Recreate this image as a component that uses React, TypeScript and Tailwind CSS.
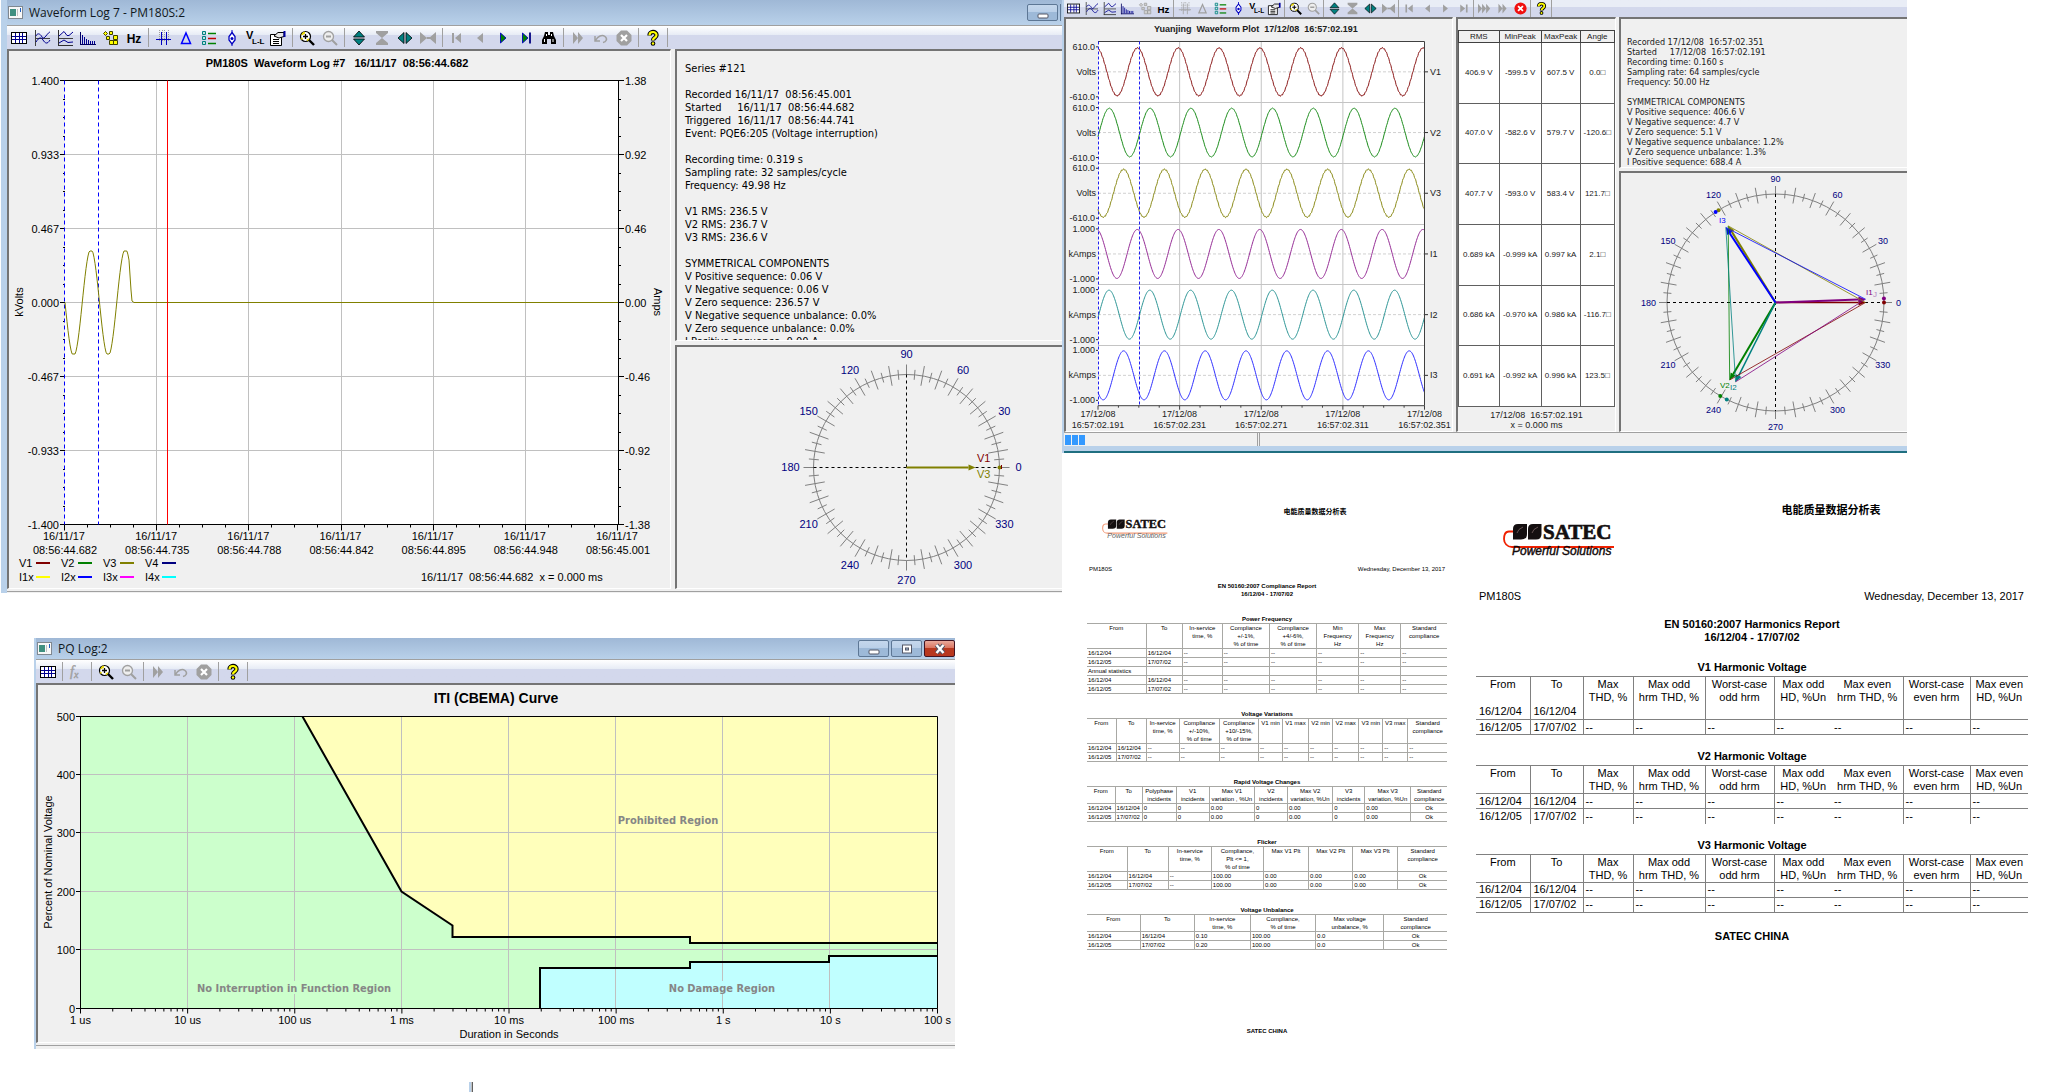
import React from "react";

/* ---------- toolbar icons ---------- */

type IconName =
  | "grid" | "scope" | "curves" | "bars" | "cascade" | "hz" | "rulers" | "rulersOff" | "delta" | "deltaOff"
  | "legend" | "marker" | "vll" | "props" | "zoomIn" | "zoomOut" | "growV" | "shrinkV" | "growH" | "shrinkH"
  | "first" | "prev" | "next" | "nextOff" | "last" | "lastOff" | "find" | "play2" | "play3" | "undo" | "stop" | "stopOn"
  | "help" | "fx" | "cascadeOff";

const G = "#a0a0a0";

function Glyph({ name }: { name: IconName }) {
  switch (name) {
    case "grid":
      return (
        <>
          <rect x="1" y="3" width="14" height="10" fill="#fff" />
          <path d="M1 6.5H15M1 9.5H15M4.5 3V13M8.5 3V13M11.5 3V13" stroke="#000090" fill="none" />
          <rect x="0.5" y="2.5" width="15" height="11" fill="none" stroke="#000" />
        </>
      );
    case "scope":
      return (
        <>
          <path d="M1.500 0V16M1 8.500H16" stroke="#404040" fill="none" />
          <path d="M2 6C3 3 6 3 8 7S13 3 16 2M2 12C5 7 7 7 9 10S13 15 16 10" stroke="#000090" fill="none" />
        </>
      );
    case "curves":
      return (
        <>
          <path d="M1.500 0V16M1 15.500H16" stroke="#303030" fill="none" />
          <path d="M2 8.500H16" stroke="#404040" fill="none" />
          <path d="M2 6L7 1.500L10 5.500H12L16 2M2 13L7 10L11 12.500L16 12" stroke="#000090" fill="none" />
        </>
      );
    case "bars":
      return (
        <>
          <path d="M0.500 2V15M0 14.500H16" stroke="#000060" fill="none" />
          <path d="M2.500 5V14M4.500 7V14M6.500 9V14M8.500 10V14M10.500 11V14M12.500 11V14M14.500 11V14" stroke="#000090" fill="none" />
        </>
      );
    case "cascade":
    case "cascadeOff": {
      const f = name === "cascade" ? "#ffff00" : "#d0d0d0";
      const s = name === "cascade" ? "#404000" : G;
      return (
        <g fill={f} stroke={s}>
          <path d="M0.500 3.500l2-2 2 2-2 2zM6.500 1.500h3v3h-3z" />
          <path d="M3.500 6.500h3v3h-3zM10.500 5.500h4v4h-4zM6.500 10.500h4v4h-4zM10.500 10.500h4v4h-4z" />
        </g>
      );
    }
    case "hz":
      return <text x="8" y="13" textAnchor="middle" fontSize="12" fontWeight="bold">Hz</text>;
    case "rulers":
    case "rulersOff":
      return (
        <>
          <path d="M4.500 0V12M7.500 0V12M9.500 0V12M13.500 0V12" stroke={G} strokeDasharray="1 1" fill="none" />
          <path d="M1 9.500H16M6.500 2V15M11.500 2V15" stroke={name === "rulers" ? "#0000c0" : G} fill="none" />
        </>
      );
    case "delta":
    case "deltaOff":
      return <path d="M8 3L12.500 13.500H3.500Z" stroke={name === "delta" ? "#0000ff" : G} strokeWidth="1.500" fill="none" />;
    case "legend":
      return (
        <>
          <path d="M1.500 1.500h3v3h-3zM1.500 6.500h3v3h-3zM1.500 11.500h3v3h-3z" fill="#c0e0e0" stroke="#008080" />
          <path d="M7 3.500H15" stroke="#008000" strokeWidth="1.500" />
          <path d="M7 8.500H15" stroke="#c00000" strokeWidth="1.500" />
          <path d="M7 13.500H15" stroke="#008000" strokeWidth="1.500" />
        </>
      );
    case "marker":
      return (
        <>
          <path d="M8 0V16" stroke="#0000c0" fill="none" />
          <path d="M8 2.500L11 6.500V10L8 14L5 10V6.500Z" fill="#fff" stroke="#0000c0" strokeWidth="1.300" />
          <circle cx="8" cy="8.500" r="1.500" fill="#0000c0" />
        </>
      );
    case "vll":
      return (
        <>
          <text x="-1" y="9" fontSize="11" fontWeight="bold">V</text>
          <text x="5" y="14" fontSize="8" fontWeight="bold">L-L</text>
        </>
      );
    case "props":
      return (
        <>
          <path d="M0.500 4.500H11.500V15.500H0.500Z" fill="#fff" stroke="#000" />
          <path d="M3 9.500H9M3 11.500H9M3 13.500H9" stroke="#000" fill="none" />
          <path d="M4 6L8 2.500H14V6.500L9 8Z" fill="#e8e8e8" stroke="#000" />
          <path d="M14.500 1V7" stroke="#0000a0" strokeWidth="2" />
        </>
      );
    case "zoomIn":
      return (
        <>
          <circle cx="6.500" cy="6.500" r="5" fill="#fff" stroke="#000" strokeWidth="1.200" />
          <path d="M3 5A4 4 0 0 1 6 2.500M3 9.500L2.500 8M8 10.500L10 9" stroke="#e8d800" strokeWidth="1.800" fill="none" />
          <path d="M4 6.500H9M6.500 4V9" stroke="#000" strokeWidth="1.300" />
          <path d="M10 10L15 15" stroke="#000" strokeWidth="2.400" />
        </>
      );
    case "zoomOut":
      return (
        <>
          <circle cx="6.500" cy="6.500" r="5" fill="#eee" stroke={G} strokeWidth="1.300" />
          <path d="M4 6.500H9M10 10L15 15" stroke={G} strokeWidth="2" />
        </>
      );
    case "growV":
      return <path d="M8 1L13.500 7H2.500ZM2.500 9H13.500L8 15Z" fill="#008080" stroke="#000" strokeWidth="0.800" />;
    case "shrinkV":
      return <path d="M2 1H14V3L8 8L2 3ZM8 8L14 13V15H2V13Z" fill={G} />;
    case "growH":
      return <path d="M1 8L7 2.500V13.500ZM9 2.500L15 8L9 13.500Z" fill="#008080" stroke="#000" strokeWidth="0.800" />;
    case "shrinkH":
      return <path d="M0 2V14L7 8ZM16 2V14L9 8ZM6 7H10V9H6Z" fill={G} />;
    case "first":
      return <path d="M3 3H5V13H3ZM12 3V13L6 8Z" fill={G} />;
    case "prev":
      return <path d="M11 3V13L5 8Z" fill={G} />;
    case "next":
      return <path d="M5.500 3V13L11 8Z" fill="#008000" stroke="#0000c0" strokeWidth="0.900" />;
    case "nextOff":
      return <path d="M5 3V13L11 8Z" fill={G} />;
    case "last":
      return (
        <>
          <path d="M4.500 3V13L10 8Z" fill="#008000" stroke="#0000c0" strokeWidth="0.900" />
          <path d="M12 2.500V13.500" stroke="#000080" strokeWidth="1.800" />
        </>
      );
    case "lastOff":
      return <path d="M4 3V13L10 8ZM11 3H13V13H11Z" fill={G} />;
    case "find":
      return (
        <>
          <path d="M4 2H7V5H9V2H12L13 6L15 10V14H10V9H6V14H1V10L3 6Z" fill="#000" />
          <path d="M3.500 9V12M12 9V12M5.500 4V6M10.500 4V6" stroke="#fff" />
        </>
      );
    case "play2":
      return <path d="M3 2V14L8 8ZM8 2V14L13 8Z" fill={G} />;
    case "play3":
      return <path d="M0 2V14L5 8ZM5 2V14L10 8ZM10 2V14L15 8Z" fill={G} />;
    case "undo":
      return <path d="M2 6L2 11H7M2.500 10.500C5 6 9 4.500 12 6.500C15 9 13 12 10 12.500" fill="none" stroke={G} strokeWidth="1.500" />;
    case "stop":
      return (
        <>
          <path d="M5 0.500H11L15.500 5V11L11 15.500H5L0.500 11V5Z" fill={G} />
          <path d="M5 5L11 11M11 5L5 11" stroke="#fff" strokeWidth="2.200" />
        </>
      );
    case "stopOn":
      return (
        <>
          <circle cx="8" cy="8" r="7.500" fill="#f01010" />
          <path d="M5 5L11 11M11 5L5 11" stroke="#fff" strokeWidth="2.200" />
        </>
      );
    case "help":
      return (
        <>
          <path d="M4.500 5.500C4.500 1 11.500 1 11.500 5C11.500 8 8 7.500 8 10.500" fill="none" stroke="#000" strokeWidth="4.400" />
          <circle cx="8" cy="13.500" r="2.300" fill="#000" />
          <path d="M4.500 5.200C4.500 1 11.500 1 11.500 5C11.500 8 8 7.500 8 10.200" fill="none" stroke="#ffff00" strokeWidth="2.200" />
          <circle cx="8" cy="13.500" r="1.200" fill="#ffff00" />
        </>
      );
    case "fx":
      return (
        <text x="1" y="12" fontSize="14" fontStyle="italic" fill={G} stroke={G} strokeWidth="0.400" fontFamily="Liberation Serif, serif">
          f<tspan fontSize="10" dy="2">x</tspan>
        </text>
      );
  }
}

function Toolbar({ items, small }: { items: (IconName | "|")[]; small?: boolean }) {
  return (
    <div
      role="toolbar"
      className={
        small
          ? "flex h-[17px] items-stretch bg-linear-to-b from-[#e9edf6] from-40% to-[#d3d8ec] to-40%"
          : "flex h-6 items-stretch border-t border-[#a0a0a0] bg-linear-to-b from-white via-[#e6ebf5] via-40% to-[#d3d8ec] to-40%"
      }
    >
      {items.map((it, i) =>
        it === "|" ? (
          <span key={i} className={small ? "flex w-[3px] shrink-0 justify-center" : "flex w-1.5 shrink-0 justify-center py-0.5"}>
            <span className="w-px bg-[#a0a0a0]" />
          </span>
        ) : (
          <button
            key={i}
            type="button"
            aria-label={it}
            className={
              small
                ? "flex w-[18px] shrink-0 items-center justify-center"
                : "flex w-[23px] shrink-0 items-center justify-center"
            }
          >
            <svg viewBox="0 0 16 16" className={small ? "h-[13px] w-[13px] overflow-visible" : "h-4 w-4 overflow-visible"}>
              <Glyph name={it} />
            </svg>
          </button>
        ),
      )}
    </div>
  );
}

/* ---------- window chrome ---------- */

function CaptionButton({ kind }: { kind: "min" | "max" | "close" }) {
  return (
    <button
      type="button"
      aria-label={kind}
      className={
        kind === "close"
          ? "flex h-[17px] w-[31px] items-center justify-center rounded-[2px] border border-[#431422] bg-linear-to-b from-[#e9a99b] via-[#d9705c] via-50% to-[#b8381f] to-50%"
          : "flex h-[17px] w-[31px] items-center justify-center rounded-[2px] border border-[#5d7795] bg-linear-to-b from-[#c5d7ec] via-[#b9cfe8] via-50% to-[#9db9d8] to-50%"
      }
    >
      <svg viewBox="0 0 14 12" className="h-3 w-3.5">
        {kind === "min" && <rect x="2" y="7" width="10" height="4" rx="1" fill="#fff" stroke="#535666" />}
        {kind === "max" && (
          <>
            <rect x="2.500" y="2" width="9" height="8" fill="#fff" stroke="#535666" />
            <rect x="5.500" y="5" width="3" height="2" fill="#a8c0dc" stroke="#535666" />
          </>
        )}
        {kind === "close" && (
          <>
            <path d="M3.500 2L10.500 10M10.500 2L3.500 10" stroke="#535666" strokeWidth="4.400" />
            <path d="M3.500 2L10.500 10M10.500 2L3.500 10" stroke="#fff" strokeWidth="2.400" />
          </>
        )}
      </svg>
    </button>
  );
}

function TitleBar({ title, children }: { title: string; children: React.ReactNode }) {
  return (
    <div className="flex h-full items-center bg-linear-to-b from-[#9fb8d6] to-[#b9d1ea] pl-px">
      <svg viewBox="0 0 15 13" className="mr-1.5 h-[13px] w-[15px] shrink-0">
        <rect x="0.500" y="0.500" width="14" height="12" fill="#f8f8f8" stroke="#808890" />
        <rect x="2" y="3" width="6" height="7" fill="#3f8f80" />
        <rect x="9" y="3" width="1" height="7" fill="#c0c0c0" />
        <rect x="12" y="2" width="1" height="4" fill="#2060c0" />
      </svg>
      <h2 className="grow font-['Open_Sans',sans-serif] text-[12px] leading-4 text-[#101820]">{title}</h2>
      <div className="flex gap-0.5">{children}</div>
    </div>
  );
}

const sunken = "overflow-hidden border-t-2 border-l-2 border-r border-b border-t-[#747474] border-l-[#747474] border-r-white border-b-white bg-[#f0f0f0]";
const sunkenOpen = "overflow-hidden border-t-2 border-l-2 border-b border-t-[#747474] border-l-[#747474] border-b-white bg-[#f0f0f0]";

/* ---------- phasor diagram ---------- */

const rad = (d: number) => (d * Math.PI) / 180;

type Vec = { a: number; r: number; c: string; w?: number };

function Phasor(p: { cx: number; cy: number; r: number; tick: number; lr: number; fs: number; vectors: Vec[]; children?: React.ReactNode }) {
  const at = (a: number, r: number) => [p.cx + r * Math.cos(rad(a)), p.cy - r * Math.sin(rad(a))];
  const ticks = [];
  for (let a = 0; a < 360; a += 5) {
    const main = a % 90 === 0;
    const len = a % 10 === 0 ? p.tick : p.tick / 2;
    const [x1, y1] = at(a, main ? p.r : p.r - len);
    const [x2, y2] = at(a, p.r + len);
    ticks.push(<line key={a} x1={x1} y1={y1} x2={x2} y2={y2} />);
  }
  return (
    <g>
      <g stroke="#808080" fill="none">
        <circle cx={p.cx} cy={p.cy} r={p.r} />
        {ticks}
      </g>
      <path
        d={`M${p.cx - p.r} ${p.cy}H${p.cx + p.r}M${p.cx} ${p.cy - p.r}V${p.cy + p.r}`}
        stroke="#000"
        strokeDasharray="3 3"
      />
      <g fill="#000080" fontSize={p.fs} textAnchor="middle">
        {[0, 30, 60, 90, 120, 150, 180, 210, 240, 270, 300, 330].map((a) => {
          const [x, y] = at(a, a === 0 ? p.lr - 1 : p.lr + (a % 180 === 0 ? 3 : 0));
          return <text key={a} x={x} y={y + p.fs * 0.36}>{a}</text>;
        })}
      </g>
      {p.vectors.map((v, i) => {
        const [x, y] = at(v.a, v.r);
        const [bx, by] = at(v.a, v.r - 7);
        const nx = 3 * Math.sin(rad(v.a));
        const ny = 3 * Math.cos(rad(v.a));
        const [dx, dy] = at(v.a, p.r);
        return (
          <g key={i} stroke={v.c} fill={v.c}>
            <line x1={p.cx} y1={p.cy} x2={bx} y2={by} strokeWidth={v.w ?? 1.5} />
            <path d={`M${x} ${y}L${bx + nx} ${by + ny}L${bx - nx} ${by - ny}Z`} stroke="none" />
            <circle cx={dx} cy={dy} r="2" stroke="none" />
          </g>
        );
      })}
      {p.children}
    </g>
  );
}

/* ---------- window 1: waveform log ---------- */

const WL = 65, WR = 618, WT = 80.5, WB = 524.5;
const xStep = (WR - WL) / 6;
const yStep = (WB - WT) / 6;

function logWave() {
  const pts: string[] = [];
  for (let x = WL; x <= 129; x += 1) {
    const s = -Math.sin((2 * Math.PI * (x - WL)) / 34.5);
    const clipped = Math.max(-0.96, Math.min(0.96, s)) / 0.96;
    pts.push(`${x},${(302.5 - 51.5 * clipped).toFixed(1)}`);
  }
  pts.push("131,290", "132,301", `134,302.5`, `${WR},302.5`);
  return pts.join(" ");
}

function WaveformLogChart() {
  const left = ["1.400", "0.933", "0.467", "0.000", "-0.467", "-0.933", "-1.400"];
  const right = ["1.38", "0.92", "0.46", "0.00", "-0.46", "-0.92", "-1.38"];
  const times = ["44.682", "44.735", "44.788", "44.842", "44.895", "44.948", "45.001"];
  const legend: [string, string, number, number][] = [
    ["V1", "#800000", 19, 567], ["V2", "#008000", 61, 567], ["V3", "#808000", 103, 567], ["V4", "#000080", 145, 567],
    ["I1x", "#ffff00", 19, 581], ["I2x", "#0000ff", 61, 581], ["I3x", "#ff00ff", 103, 581], ["I4x", "#00ffff", 145, 581],
  ];
  return (
    <svg viewBox="9 51 661 537" className="block h-auto w-full" fontSize="11">
      <rect x={WL} y={WT} width={WR - WL} height={WB - WT} fill="#fff" />
      <text x="337" y="67" textAnchor="middle" fontWeight="bold">
        {"PM180S\u00a0 Waveform Log #7\u00a0\u00a0 16/11/17\u00a0 08:56:44.682"}
      </text>
      <g stroke="#c0c0c0">
        {[1, 2, 3, 4, 5].map((i) => (
          <React.Fragment key={i}>
            <line x1={Math.round(WL + i * xStep) - 0.5} x2={Math.round(WL + i * xStep) - 0.5} y1={WT} y2={WB} />
            <line x1={WL} x2={WR} y1={WT + i * yStep} y2={WT + i * yStep} />
          </React.Fragment>
        ))}
      </g>
      <path d={`M60 ${WT}H623M60 ${WB}H623M${WR + 0.5} ${WT}V${WB}`} stroke="#000" />
      <g stroke="#000">
        {Array.from({ length: 25 }, (_, i) => {
          const y = Math.floor(WT + (i * yStep) / 4) + 0.5;
          const x = Math.round(WL + (i * xStep) / 4) - 0.5;
          const l = i % 4 === 0 ? 5 : 2;
          return <path key={i} d={`M${WL - l} ${y}H${WL}M${WR} ${y}H${WR + l + 1}M${x} ${WB}V${WB + l + 1}`} />;
        })}
      </g>
      <path d={`M64.500 ${WT}V${WB}M98.500 ${WT}V${WB}`} stroke="#0000ff" strokeDasharray="4 3" />
      <polyline points={logWave()} fill="none" stroke="#808000" />
      <path d={`M167.500 ${WT}V${WB}`} stroke="#ff0000" />
      {left.map((t, i) => (
        <text key={t} x="59" y={WT + i * yStep + 4} textAnchor="end">{t}</text>
      ))}
      {right.map((t, i) => (
        <text key={t} x="625" y={WT + i * yStep + 4}>{t}</text>
      ))}
      {times.map((t, i) => (
        <g key={t} textAnchor="middle">
          <text x={WL - 1 + i * xStep} y="540">16/11/17</text>
          <text x={WL + i * xStep} y="554">{"08:56:" + t}</text>
        </g>
      ))}
      <text transform="translate(23 302) rotate(-90)" textAnchor="middle">kVolts</text>
      <text transform="translate(654 302) rotate(90)" textAnchor="middle">Amps</text>
      {legend.map(([t, c, x, y]) => (
        <g key={t}>
          <text x={x} y={y}>{t}</text>
          <rect x={x + 17} y={y - 5} width="14" height="2" fill={c} />
        </g>
      ))}
      <text x="421" y="581">{"16/11/17\u00a0 08:56:44.682\u00a0 x = 0.000 ms"}</text>
    </svg>
  );
}

const tahoma = "font-['DejaVu_Sans_Condensed','DejaVu_Sans',sans-serif]";

function WaveformLogWindow() {
  return (
    <section className="ml-px border-l-6 border-[#b9d1ea] bg-[#f0f0f0]">
      <div className="h-[25px]">
        <TitleBar title="Waveform Log 7 - PM180S:2">
          <CaptionButton kind="min" />
          <span className="h-[17px] w-0.5 border-l border-[#5d7795]" />
        </TitleBar>
      </div>
      <Toolbar
        items={["grid", "scope", "curves", "bars", "cascade", "hz", "|", "rulers", "delta", "legend", "marker", "vll", "props", "|",
          "zoomIn", "zoomOut", "|", "growV", "shrinkV", "growH", "shrinkH", "|", "first", "prev", "next", "last", "find", "|",
          "play2", "undo", "stop", "|", "help", "|"]}
      />
      <div className="grid grid-cols-[664fr_4fr_387fr]">
        <div className={sunken}><WaveformLogChart /></div>
        <div />
        <div className="flex flex-col gap-1">
          <div className={`h-[292px] pt-[11px] pl-[8px] text-[11px] leading-[13px] whitespace-pre ${tahoma} ${sunkenOpen}`}>
            {`Series #121

Recorded 16/11/17  08:56:45.001
Started     16/11/17  08:56:44.682
Triggered  16/11/17  08:56:44.741
Event: PQE6:205 (Voltage interruption)

Recording time: 0.319 s
Sampling rate: 32 samples/cycle
Frequency: 49.98 Hz

V1 RMS: 236.5 V
V2 RMS: 236.7 V
V3 RMS: 236.6 V

SYMMETRICAL COMPONENTS
V Positive sequence: 0.06 V
V Negative sequence: 0.06 V
V Zero sequence: 236.57 V
V Negative sequence unbalance: 0.0%
V Zero sequence unbalance: 0.0%
I Positive sequence: 0.00 A`}
          </div>
          <div className={sunkenOpen}>
            <svg viewBox="677 347 385 241" className="block h-auto w-full">
              <Phasor cx={906.5} cy={467.5} r={93} tick={10} lr={113} fs={11} vectors={[{ a: 0, r: 69, c: "#808000", w: 2 }]}>
                <rect x="1001" y="465" width="1" height="4" fill="#800000" />
                <g fontSize="11">
                  <text x="977" y="462" fill="#800000">V1</text>
                  <text x="977" y="478" fill="#808000">V3</text>
                </g>
              </Phasor>
            </svg>
          </div>
        </div>
      </div>
      <div className="h-[4px] border-t border-[#f0f0f0]">
        <div className="mt-px h-px bg-[#a0a0a0]" />
      </div>
    </section>
  );
}

/* ---------- window 2: PQ log ---------- */

const CL = 80.5, CR = 937.5, CT = 716.5, CB = 1008.5;
const dec = (CR - CL) / 8;
const pct = (CB - CT) / 5;

function CbemaChart() {
  const xs = ["1 us", "10 us", "100 us", "1 ms", "10 ms", "100 ms", "1 s", "10 s", "100 s"];
  const upper = "M302.500 716.500L401.500 891.500L452.500 925.500V937H690V943H937.500";
  const lower = "M540 1008.500V968H690V962H829V956H937.500";
  const minor: number[] = [];
  for (let d = 0; d < 8; d++) for (let k = 2; k < 10; k++) minor.push(CL + dec * (d + Math.log10(k)));
  return (
    <svg viewBox="38 685 917 357" className="block h-auto w-full" fontSize="11">
      <rect x={CL} y={CT} width={CR - CL} height={CB - CT} fill="#ccffcc" />
      <path d={`${upper}V716.500Z`} fill="#ffffbb" />
      <path d={`${lower}V1008.500Z`} fill="#c0ffff" />
      <g stroke="#c0c0c0">
        {[1, 2, 3, 4, 5, 6, 7].map((i) => (
          <line key={i} x1={Math.round(CL + i * dec) - 0.5} x2={Math.round(CL + i * dec) - 0.5} y1={CT} y2={CB} />
        ))}
        {[1, 2, 3, 4].map((i) => (
          <line key={i} x1={CL} x2={CR} y1={Math.round(CT + i * pct) - 0.5} y2={Math.round(CT + i * pct) - 0.5} />
        ))}
      </g>
      <rect x="198" y="981" width="193" height="13" fill="#ccffcc" />
      <rect x="669" y="981" width="107" height="13" fill="#c0ffff" />
      <path d={`M76 ${CT}H${CR}V${CB}H76M${CL} ${CT}V${CB}`} fill="none" stroke="#000" />
      <path d={upper} fill="none" stroke="#000" strokeWidth="2" />
      <path d={lower} fill="none" stroke="#000" strokeWidth="2" />
      <g stroke="#000">
        {minor.map((x) => <line key={x} x1={x} x2={x} y1={CB} y2={CB + 3} />)}
        {xs.map((t, i) => <line key={t} x1={CL + i * dec} x2={CL + i * dec} y1={CB} y2={CB + 5} />)}
        {[1, 2, 3, 4].map((i) => <line key={i} x1="76" x2={CL} y1={Math.round(CT + i * pct) - 0.5} y2={Math.round(CT + i * pct) - 0.5} />)}
      </g>
      <text x="496" y="703" textAnchor="middle" fontSize="14" fontWeight="bold">ITI (CBEMA) Curve</text>
      {[500, 400, 300, 200, 100, 0].map((v, i) => (
        <text key={v} x="75" y={CT + i * pct + 4} textAnchor="end">{v}</text>
      ))}
      {xs.map((t, i) => (
        <text key={t} x={CL + i * dec} y="1024" textAnchor="middle">{t}</text>
      ))}
      <text x="509" y="1038" textAnchor="middle">Duration in Seconds</text>
      <text transform="translate(52 862) rotate(-90)" textAnchor="middle">Percent of Nominal Voltage</text>
      <g className={tahoma} fontWeight="bold" fill="#868686" textAnchor="middle">
        <text x="668" y="824">Prohibited Region</text>
        <text x="294" y="992">No Interruption in Function Region</text>
        <text x="722" y="992">No Damage Region</text>
      </g>
    </svg>
  );
}

function PqLogWindow() {
  return (
    <section className="border-l-2 border-[#b9d1ea] bg-[#f0f0f0]">
      <div className="h-[21px]">
        <TitleBar title="PQ Log:2">
          <CaptionButton kind="min" />
          <CaptionButton kind="max" />
          <CaptionButton kind="close" />
        </TitleBar>
      </div>
      <Toolbar items={["grid", "|", "fx", "|", "zoomIn", "zoomOut", "|", "play2", "undo", "stop", "|", "help", "|"]} />
      <div className={sunkenOpen}><CbemaChart /></div>
      <div className="mt-0.5 h-[4px] border-t border-[#a0a0a0]" />
    </section>
  );
}

/* ---------- window 3: waveform plot ---------- */

const PL = 1098, PR = 1424.5, PT = 41.5, PH = 60.7;

const channels = [
  { n: "V1", u: "Volts", m: "610.0", c: "#8c1a1a", peak: 1096.7, rough: 0.05, rms: "406.9 V", min: "-599.5 V", max: "607.5 V", ang: "0.0□" },
  { n: "V2", u: "Volts", m: "610.0", c: "#1a8c1a", peak: 1109.3, rough: 0.02, rms: "407.0 V", min: "-582.6 V", max: "579.7 V", ang: "-120.6□" },
  { n: "V3", u: "Volts", m: "610.0", c: "#8c8c1a", peak: 1123.6, rough: 0.05, rms: "407.7 V", min: "-593.0 V", max: "583.4 V", ang: "121.7□" },
  { n: "I1", u: "kAmps", m: "1.000", c: "#962d96", peak: 1096.5, rough: 0, rms: "0.689 kA", min: "-0.999 kA", max: "0.997 kA", ang: "2.1□" },
  { n: "I2", u: "kAmps", m: "1.000", c: "#2d9696", peak: 1109, rough: 0, rms: "0.686 kA", min: "-0.970 kA", max: "0.986 kA", ang: "-116.7□" },
  { n: "I3", u: "kAmps", m: "1.000", c: "#3030ff", peak: 1123.6, rough: 0, rms: "0.691 kA", min: "-0.992 kA", max: "0.996 kA", ang: "123.5□" },
];

function plotWave(mid: number, peak: number, rough: number) {
  const pts: string[] = [];
  for (let x = PL; x <= PR; x += 0.5) {
    const t = (2 * Math.PI * (x - peak)) / 40.8;
    pts.push(`${x},${(mid - 24.5 * (Math.cos(t) * (1 - rough / 2) + rough * 0.5 * Math.cos(19 * t))).toFixed(2)}`);
  }
  return pts.join(" ");
}

function PlotChart() {
  const bottom = PT + 6 * PH;
  const q = (PR - PL) / 4;
  return (
    <svg viewBox="1066 19 386 412" className="block h-auto w-full" fontSize="9" fill="#202020">
      <rect x={PL} y={PT} width={PR - PL} height={6 * PH} fill="#fff" />
      <text x="1256" y="32" textAnchor="middle" fontWeight="bold">
        {"Yuanjing\u00a0 Waveform Plot\u00a0 17/12/08\u00a0 16:57:02.191"}
      </text>
      <g stroke="#c4c4c4">
        {[1, 2, 3].map((i) => <line key={i} x1={PL + i * q} x2={PL + i * q} y1={PT} y2={bottom} />)}
        {[1, 2, 3, 4, 5].map((i) => <line key={i} x1={PL} x2={PR} y1={Math.round(PT + i * PH) + 0.5} y2={Math.round(PT + i * PH) + 0.5} />)}
      </g>
      {channels.map((c, i) => {
        const mid = PT + PH * (i + 0.5);
        return (
          <g key={c.n}>
            <line x1={PL} x2={PR} y1={mid} y2={mid} stroke="#d0d0d0" strokeDasharray="3 2" />
            <polyline points={plotWave(mid, c.peak, c.rough)} fill="none" stroke={c.c} />
            <path d={`M1096 ${mid - 25}H${PL}M1096 ${mid + 25}H${PL}M${PR} ${mid}H1428`} stroke="#303030" />
            <text x="1095" y={mid - 22} textAnchor="end">{c.m}</text>
            <text x="1096" y={mid + 3} textAnchor="end">{c.u}</text>
            <text x="1095" y={mid + 28} textAnchor="end">{"-" + c.m}</text>
            <text x="1430" y={mid + 3}>{c.n}</text>
          </g>
        );
      })}
      <path d={`M${PL} ${PT}H${PR}V${bottom}H${PL}`} fill="none" stroke="#404040" />
      <path d={`M1098.500 ${PT}V${bottom}M1139.500 ${PT}V${bottom}`} stroke="#2020f0" strokeDasharray="3 2" />
      {Array.from({ length: 17 }, (_, i) => (
        <line key={i} x1={PL + (i * q) / 4} x2={PL + (i * q) / 4} y1={bottom} y2={bottom + (i % 4 === 0 ? 4 : 2)} stroke="#404040" />
      ))}
      {["191", "231", "271", "311", "351"].map((t, i) => (
        <g key={t} textAnchor="middle">
          <text x={PL + i * q} y="417">17/12/08</text>
          <text x={PL + i * q} y="428">{"16:57:02." + t}</text>
        </g>
      ))}
    </svg>
  );
}

function WaveformPlotWindow() {
  const colors = { V1: "#800000", V2: "#008000", V3: "#808000", I1: "#800080", I2: "#008080", I3: "#0000ff" };
  const vectors: Vec[] = [
    { a: 0, r: 90, c: colors.V1 }, { a: -120.6, r: 90, c: colors.V2, w: 2 }, { a: 121.7, r: 90, c: colors.V3, w: 2 },
    { a: 2.1, r: 90, c: colors.I1, w: 2 }, { a: -116.7, r: 88.8, c: colors.I2 }, { a: 123.5, r: 90, c: colors.I3, w: 2 },
  ];
  const pt = (i: number) => {
    const v = vectors[i];
    return [1775.5 + v.r * Math.cos(rad(v.a)), 302.5 - v.r * Math.sin(rad(v.a))];
  };
  const edges: [number, number, string][] = [
    [0, 1, colors.V1], [1, 2, colors.V2], [2, 0, colors.V3], [3, 4, colors.I1], [4, 5, colors.I2], [5, 3, colors.I3],
  ];
  return (
    <section className="border-l-2 border-[#b9d1ea] bg-[#f0f0f0]">
      <Toolbar
        small
        items={["grid", "scope", "curves", "bars", "cascadeOff", "hz", "|", "rulersOff", "deltaOff", "legend", "marker", "vll", "props", "|",
          "zoomIn", "zoomOut", "|", "growV", "shrinkV", "growH", "shrinkH", "|", "first", "prev", "nextOff", "lastOff", "|",
          "play3", "play2", "stopOn", "|", "help", "|"]}
      />
      <div className="grid grid-cols-[389fr_160fr_288fr] gap-[3px]">
        <div className={sunken}><PlotChart /></div>
        <div className={`${sunken} pt-[11px] text-[8px] leading-[10px] text-[#202020]`}>
          <table className="h-[377px] w-full table-fixed border-collapse border border-[#404040] text-center">
            <colgroup>
              <col className="w-[26%]" />
              <col className="w-[27%]" />
              <col className="w-[25%]" />
              <col className="w-[22%]" />
            </colgroup>
            <thead>
              <tr className="h-3">
                {["RMS", "MinPeak", "MaxPeak", "Angle"].map((h) => (
                  <th key={h} className="border border-[#404040] p-0 font-normal">{h}</th>
                ))}
              </tr>
            </thead>
            <tbody className="bg-white">
              {channels.map((c) => (
                <tr key={c.n}>
                  {[c.rms, c.min, c.max, c.ang].map((v, i) => (
                    <td key={i} className="border border-[#606060] p-0 whitespace-nowrap">{v}</td>
                  ))}
                </tr>
              ))}
            </tbody>
          </table>
          <p className="mt-[3px] text-center text-[9px]">
            {"17/12/08\u00a0 16:57:02.191"}
            <br />x = 0.000 ms
          </p>
        </div>
        <div className="flex flex-col gap-[3px]">
          <div className={`h-[151px] pt-[18px] pl-[6px] text-[9px] leading-[10px] whitespace-pre text-[#202020] ${tahoma} ${sunkenOpen}`}>
            {`Recorded 17/12/08  16:57:02.351
Started     17/12/08  16:57:02.191
Recording time: 0.160 s
Sampling rate: 64 samples/cycle
Frequency: 50.00 Hz

SYMMETRICAL COMPONENTS
V Positive sequence: 406.6 V
V Negative sequence: 4.7 V
V Zero sequence: 5.1 V
V Negative sequence unbalance: 1.2%
V Zero sequence unbalance: 1.3%
I Positive sequence: 688.4 A`}
          </div>
          <div className={sunkenOpen}>
            <svg viewBox="1621 173 286 258" className="block h-auto w-full">
              <Phasor cx={1775.5} cy={302.5} r={108.5} tick={8} lr={124} fs={9} vectors={vectors}>
                {edges.map(([a, b, c], i) => (
                  <line key={i} x1={pt(a)[0]} y1={pt(a)[1]} x2={pt(b)[0]} y2={pt(b)[1]} stroke={c} strokeWidth="0.800" />
                ))}
                <g fontSize="8">
                  <text x="1866" y="295" fill={colors.I1}>I1</text>
                  <text x="1873" y="297" fill="#b080c0">J</text>
                  <text x="1719" y="223" fill={colors.I3}>I3</text>
                  <text x="1720" y="388" fill={colors.V2}>V2</text>
                  <text x="1730" y="390" fill={colors.I2}>I2</text>
                </g>
              </Phasor>
            </svg>
          </div>
        </div>
      </div>
      <div className="flex h-[14px] gap-px border-t border-[#a0a0a0]">
        <div className="flex w-[23%] items-center gap-px border-r border-[#a0a0a0] pl-px">
          <span className="h-[10px] w-1.5 bg-[#3399ff]" />
          <span className="h-[10px] w-1.5 bg-[#3399ff]" />
          <span className="h-[10px] w-1.5 bg-[#3399ff]" />
        </div>
        <div className="grow border-l border-[#a0a0a0]" />
      </div>
      <div className="h-[7px] border-b-2 border-[#1f6f80] bg-[#b9d1ea]" />
    </section>
  );
}

/* ---------- reports ---------- */

function SatecLogo({ faded }: { faded?: boolean }) {
  const red = faded ? "#f29a78" : "#f02000";
  return (
    <svg viewBox="0 0 112 34" role="img" aria-label="SATEC" className={faded ? "block h-5 w-[66px]" : "block h-[34px] w-28"}>
      <path d="M11 8.500H6C1.500 8.500 1 13 1 16C1 20 4 24 9 24H111" fill="none" stroke={red} strokeWidth="1.800" />
      <path d="M10 16.500V6Q10 1 15 1H24V11Q24 16.500 18 16.500Z" fill="#140f10" />
      <path d="M25 16.500V6Q25 1 30 1H38.500V11Q38.500 16.500 33 16.500Z" fill="#140f10" />
      <path d="M14 10Q15 6 20 4M29 10Q30 6 35 4" stroke="#8a7070" strokeWidth="0.700" fill="none" />
      <text x="40" y="16" fontSize="21" fontWeight="bold" fontFamily="Liberation Serif, serif" fill="#140f10" stroke="#140f10" strokeWidth="0.700">
        SATEC
      </text>
      <text x="9" y="32" fontSize="12" fontStyle="italic" fill={faded ? "#606060" : "#100808"} stroke={faded ? "none" : "#100808"} strokeWidth="0.400">
        Powerful Solutions
      </text>
    </svg>
  );
}

type TableData = { title: string; widths: number[]; head: string[]; rows: string[][] };

function ReportTable({ t, big, openBottom, joinFirst, noRule }: { t: TableData; big?: boolean; openBottom?: boolean; joinFirst?: boolean; noRule?: number }) {
  const total = t.widths.reduce((a, b) => a + b, 0);
  const line = big ? "border-[#808080]" : "border-[#a8a8a4]";
  return (
    <table className={`w-full table-fixed border-collapse ${openBottom ? "" : "border-b"} ${line}`}>
      <caption className={big ? "h-[15px] font-bold text-black" : "font-bold text-black"}>{t.title}</caption>
      <colgroup>
        {t.widths.map((w, i) => <col key={i} style={{ width: `${(w / total) * 100}%` }} />)}
      </colgroup>
      <thead>
        <tr className={`border-t align-top ${line} ${big ? "h-7" : ""}`}>
          {t.head.map((h, i) => (
            <th key={i} className={`p-0 font-normal whitespace-pre ${big ? "pt-px" : ""} ${i === 0 || i === noRule ? "" : `border-l ${line}`}`}>{h}</th>
          ))}
        </tr>
      </thead>
      <tbody>
        {t.rows.map((r, k) => (
          <tr key={k} className={`${big ? "h-[15px]" : ""} ${joinFirst && k === 0 ? "" : `border-t ${line}`}`}>
            {r.map((v, i) => (
              <td
                key={i}
                className={`p-0 whitespace-nowrap ${i === 0 || i === noRule ? "" : `border-l ${line}`} ${v === "Ok" ? "text-center" : big ? (i < 2 ? "pl-[3px]" : "pl-0.5") : "pl-px"}`}
              >
                {v}
              </td>
            ))}
          </tr>
        ))}
      </tbody>
    </table>
  );
}

const d = "--";
const day1 = ["16/12/04", "16/12/04"];
const day2 = ["16/12/05", "17/07/02"];
const dashes = (n: number) => Array<string>(n).fill(d);

const powerFrequency: TableData = {
  title: "Power Frequency",
  widths: [59, 36, 40, 47, 47, 42, 42, 46],
  head: ["From", "To", "In-service\ntime, %", "Compliance\n+/-1%,\n% of time", "Compliance\n+4/-6%,\n% of time", "Min\nFrequency\nHz", "Max\nFrequency\nHz", "Standard\ncompliance"],
  rows: [[...day1, ...dashes(6)], [...day2, ...dashes(6)], ["Annual statistics", "", "", "", "", "", "", ""], [...day1, ...dashes(6)], [...day2, ...dashes(6)]],
};
const voltageVariations: TableData = {
  title: "Voltage Variations",
  widths: [29, 30, 33, 40, 39, 24, 26, 24, 26, 24, 25, 39],
  head: ["From", "To", "In-service\ntime, %", "Compliance\n+/-10%,\n% of time", "Compliance\n+10/-15%,\n% of time", "V1 min", "V1 max", "V2 min", "V2 max", "V3 min", "V3 max", "Standard\ncompliance"],
  rows: [[...day1, ...dashes(10)], [...day2, ...dashes(10)]],
};
const rapid = ["0", "0", "0.00", "0", "0.00", "0", "0.00", "Ok"];
const rapidChanges: TableData = {
  title: "Rapid Voltage Changes",
  widths: [28, 27, 34, 33, 45, 33, 45, 32, 46, 36],
  head: ["From", "To", "Polyphase\nincidents", "V1\nincidents", "Max V1\nvariation , %Un", "V2\nincidents", "Max V2\nvariation, %Un", "V3\nincidents", "Max V3\nvariation, %Un", "Standard\ncompliance"],
  rows: [[...day1, ...rapid], [...day2, ...rapid]],
};
const flick = [d, "100.00", "0.00", "0.00", "0.00", "Ok"];
const flicker: TableData = {
  title: "Flicker",
  widths: [40, 41, 43, 52, 45, 44, 45, 49],
  head: ["From", "To", "In-service\ntime, %", "Compliance,\nPlt <= 1,\n% of time", "Max V1 Plt", "Max V2 Plt", "Max V3 Plt", "Standard\ncompliance"],
  rows: [[...day1, ...flick], [...day2, ...flick]],
};
const unbalance: TableData = {
  title: "Voltage Unbalance",
  widths: [53, 54, 56, 65, 68, 63],
  head: ["From", "To", "In-service\ntime, %", "Compliance,\n% of time", "Max voltage\nunbalance, %", "Standard\ncompliance"],
  rows: [[...day1, "0.10", "100.00", "0.0", "Ok"], [...day2, "0.20", "100.00", "0.0", "Ok"]],
};
const harmonic = (n: number, firstEmpty: boolean): TableData => ({
  title: `V${n} Harmonic Voltage`,
  widths: [54, 53, 50, 72, 69, 58, 71, 67, 58],
  head: ["From", "To", "Max\nTHD, %", "Max odd\nhrm THD, %", "Worst-case\nodd hrm", "Max odd\nHD, %Un", "Max even\nhrm THD, %", "Worst-case\neven hrm", "Max even\nHD, %Un"],
  rows: [[...day1, ...(firstEmpty ? Array<string>(7).fill("") : dashes(7))], [...day2, ...dashes(7)]],
});

const heading = "电能质量数据分析表";

function ComplianceReport() {
  return (
    <article className="pt-[54px] text-[6px] leading-[8px] text-black">
      <h2 className="pl-24 text-center font-['Noto_Sans_CJK_SC',sans-serif] text-[7px] font-bold">{heading}</h2>
      <div className="mt-1 pl-[15px]"><SatecLogo faded /></div>
      <div className="mt-[26px] flex justify-between px-0.5">
        <span>PM180S</span>
        <span>Wednesday, December 13, 2017</span>
      </div>
      <h3 className="mt-[9px] text-center font-bold">EN 50160:2007 Compliance Report<br />16/12/04 - 17/07/02</h3>
      <div className="mt-[17px] flex flex-col gap-4">
        <ReportTable t={powerFrequency} />
        <ReportTable t={voltageVariations} />
        <ReportTable t={rapidChanges} />
        <ReportTable t={flicker} />
        <ReportTable t={unbalance} />
      </div>
      <p className="mt-[77px] text-center font-bold">SATEC CHINA</p>
    </article>
  );
}

function HarmonicsReport() {
  return (
    <article className="pt-[49px] text-[11px] leading-[13px] text-black">
      <h2 className="pl-[158px] text-center font-['Noto_Sans_CJK_SC',sans-serif] text-[11px] leading-[14px] font-bold">{heading}</h2>
      <div className="mt-[7px] pl-[27px]"><SatecLogo /></div>
      <div className="mt-[33px] flex justify-between pr-1 pl-[3px]">
        <span>PM180S</span>
        <span>Wednesday, December 13, 2017</span>
      </div>
      <h3 className="mt-[15px] text-center font-bold">EN 50160:2007 Harmonics Report<br />16/12/04 - 17/07/02</h3>
      <div className="mt-[17px] flex flex-col gap-[15px]">
        <ReportTable t={harmonic(1, true)} big joinFirst noRule={6} />
        <ReportTable t={harmonic(2, false)} big openBottom noRule={6} />
        <ReportTable t={harmonic(3, false)} big noRule={6} />
      </div>
      <p className="mt-[17px] text-center font-bold">SATEC CHINA</p>
    </article>
  );
}

export default function App() {
  return (
    <main className="grid min-h-screen grid-cols-[1062fr_990fr] bg-white font-['Liberation_Sans',Arial,sans-serif] text-black">
      <div className="flex flex-col">
        <WaveformLogWindow />
        <div className="mt-[45px] grid grid-cols-[34fr_921fr_107fr]">
          <div />
          <PqLogWindow />
        </div>
        <div className="mt-auto grid grid-cols-[469fr_593fr]">
          <div />
          <div className="h-[10px] w-1 border-l-2 border-r border-l-[#b9d1ea] border-r-[#606060] bg-[#c0c0c0]" />
        </div>
      </div>
      <div>
        <div className="grid grid-cols-[845fr_145fr]">
          <WaveformPlotWindow />
        </div>
        <div className="grid grid-cols-[25fr_360fr_29fr_552fr_24fr]">
          <div />
          <ComplianceReport />
          <div />
          <HarmonicsReport />
        </div>
      </div>
    </main>
  );
}
